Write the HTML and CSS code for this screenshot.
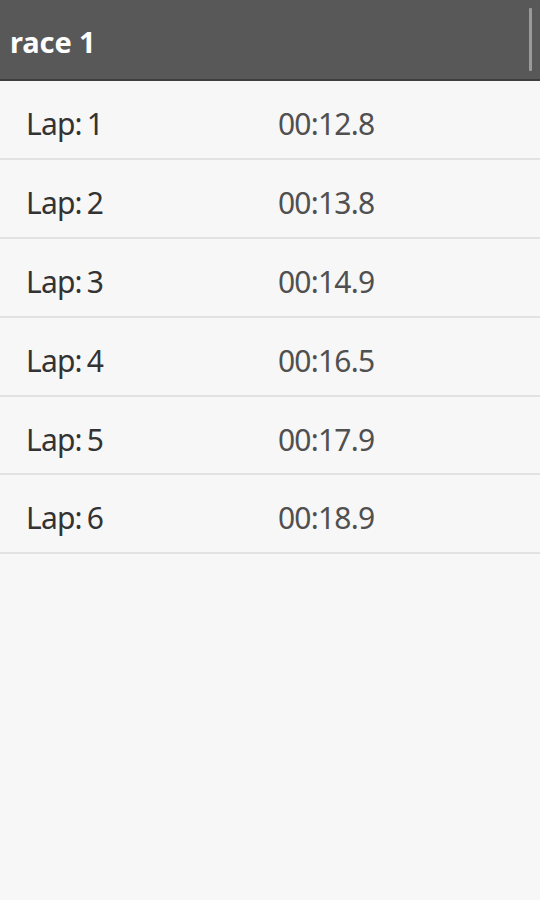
FILE: index.html
```html
<!DOCTYPE html>
<html lang="en">
<head>
  <meta charset="UTF-8">
  <title>race 1</title>
  <link rel="stylesheet" href="styles.css">
</head>
<body>
  <div class="bar">
    <div class="title">race 1</div>
    <div class="divider"></div>
  </div>

  <div class="laps">
    <div class="lap"><span class="label">Lap: 1</span><span class="time">00:12.8</span></div>
    <div class="lap"><span class="label">Lap: 2</span><span class="time">00:13.8</span></div>
    <div class="lap"><span class="label">Lap: 3</span><span class="time">00:14.9</span></div>
    <div class="lap"><span class="label">Lap: 4</span><span class="time">00:16.5</span></div>
    <div class="lap"><span class="label">Lap: 5</span><span class="time">00:17.9</span></div>
    <div class="lap"><span class="label">Lap: 6</span><span class="time">00:18.9</span></div>
  </div>
</body>
</html>
```

FILE: styles.css
```css
* {
  box-sizing: border-box;
}

html, body {
  margin: 0;
  padding: 0;
  height: 100%;
  background-color: #f7f7f7;
  font-family: 'Noto Sans', 'Open Sans', sans-serif;
}

.bar {
  display: flex;
  align-items: center;
  height: 81px;
  padding: 0 10px;
  background-color: #585858;
  border-bottom: 2px solid #3e3e3e;
}

.title {
  flex-grow: 1;
  color: #fff;
  font-size: 29px;
  font-weight: bold;
  letter-spacing: -0.1px;
  padding-top: 3px;
}

.divider {
  width: 3px;
  height: 63px;
  margin-right: -2px;
  background-color: #9a9a9a;
  border-radius: 1px;
}

.lap {
  display: flex;
  align-items: center;
  height: 78.9px;
  padding-left: 26px;
  padding-top: 8px;
  border-bottom: 2px solid #e2e2e2;
  font-size: 30px;
  letter-spacing: -0.8px;
}

.label {
  width: 252px;
  color: #333;
  word-spacing: -2px;
}

.time {
  color: #505050;
}
```
